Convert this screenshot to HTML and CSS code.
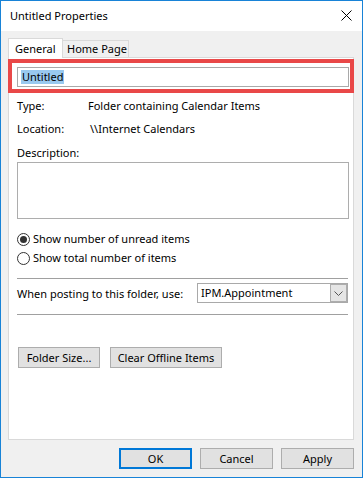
FILE: index.html
```html
<!DOCTYPE html>
<html>
<head>
<meta charset="utf-8">
<link rel="stylesheet" href="styles.css">
</head>
<body>
<div class="window">
  <div class="titlebar">
    <span class="title">Untitled Properties</span>
    <svg class="close" width="11" height="11" viewBox="0 0 11 11"><path d="M0.5 0.5 L10.5 10.5 M10.5 0.5 L0.5 10.5" stroke="#000" stroke-width="1" fill="none"/></svg>
  </div>
  <div class="client">
    <div class="tabs">
      <div class="tab active">General</div>
      <div class="tab">Home Page</div>
    </div>
    <div class="panel">
      <div class="highlight"></div>
      <div class="name-input"><span class="sel">Untitled</span></div>
      <div class="info-row first"><span class="label">Type:</span><span>Folder containing Calendar Items</span></div>
      <div class="info-row loc"><span class="label">Location:</span><span class="val-loc">\\Internet Calendars</span></div>
      <div class="info-row desc">Description:</div>
      <div class="desc-box"></div>
      <div class="radio-row first"><span class="radio checked"></span><span>Show number of unread items</span></div>
      <div class="radio-row second"><span class="radio"></span><span>Show total number of items</span></div>
      <div class="sep sep1"></div>
      <div class="post-row">
        <span>When posting to this folder, use:</span>
        <div class="combo">
          <span class="combo-text">IPM.Appointment</span>
          <div class="drop"><svg width="9" height="5" viewBox="0 0 9 5"><path d="M0.5 0.5 L4.5 4.5 L8.5 0.5" stroke="#555" stroke-width="1" fill="none"/></svg></div>
        </div>
      </div>
      <div class="sep sep2"></div>
      <div class="panel-buttons">
        <div class="btn folder">Folder Size...</div>
        <div class="btn clear">Clear Offline Items</div>
      </div>
    </div>
    <div class="dialog-buttons">
      <div class="btn dlg default">OK</div>
      <div class="btn dlg">Cancel</div>
      <div class="btn dlg">Apply</div>
    </div>
  </div>
</div>
</body>
</html>
```
FILE: styles.css
```css
* { box-sizing: border-box; }
html, body { margin: 0; padding: 0; background: #f0f0f0; }
body { font-family: "Noto Sans", "Open Sans", sans-serif; font-size: 11px; color: #000; }

.window {
  width: 363px;
  height: 478px;
  border: 1px solid #1883d7;
  background: #f0f0f0;
  display: flex;
  flex-direction: column;
}

.titlebar {
  height: 30px;
  background: #fff;
  display: flex;
  align-items: center;
  justify-content: space-between;
  padding: 0 10px 0 9px;
}
.title { font-size: 11px; line-height: 16px; }
.close { display: block; margin-top: -1px; }

.client { padding: 7px 8px 0 7px; display: flex; flex-direction: column; }

.tabs { display: flex; align-items: flex-end; height: 19px; }
.tab {
  border: 1px solid #d9d9d9;
  border-bottom: none;
  height: 17px;
  line-height: 16px;
  padding: 0 0 0 4px;
  background: #f0f0f0;
  position: relative;
}
.tab.active {
  background: #fff;
  height: 20px;
  margin-bottom: -1px;
  width: 55px;
  padding-left: 6px;
  line-height: 20px;
  z-index: 2;
}
.tab:not(.active) { margin-left: -1px; width: 67px; }

.panel {
  position: relative;
  height: 383px;
  border: 1px solid #d9d9d9;
  background: #fff;
  padding: 0 5px 0 8px;
  display: flex;
  flex-direction: column;
}

.highlight {
  position: absolute;
  left: -1px;
  top: 1px;
  width: 346px;
  height: 34px;
  border: 4px solid #e94848;
}

.name-input {
  margin-top: 9px;
  height: 20px;
  width: 332px;
  border: 1px solid #a9a9a9;
  padding: 2px 0 0 3px;
  line-height: 14px;
}
.sel { background: #99c9ef; display: inline-block; height: 14px; padding: 0 1px; }

.info-row { height: 16px; line-height: 16px; display: flex; }
.info-row.first { margin-top: 11px; }
.info-row.loc { margin-top: 7px; }
.info-row.desc { margin-top: 8px; }
.label { width: 71px; flex: none; }
.val-loc { margin-left: 2px; }

.desc-box {
  margin-top: 1px;
  height: 57px;
  width: 332px;
  border: 1px solid #adadad;
}

.radio-row { height: 16px; line-height: 16px; display: flex; align-items: center; }
.radio-row.first { margin-top: 12px; }
.radio-row.second { margin-top: 3px; }
.radio {
  width: 13px; height: 13px;
  border: 1px solid #333;
  border-radius: 50%;
  margin-right: 3px;
  display: flex; align-items: center; justify-content: center;
  flex: none;
}
.radio.checked::after {
  content: "";
  width: 7px; height: 7px;
  border-radius: 50%;
  background: #333;
}

.sep { height: 1px; width: 331px; background: #a0a0a0; }
.sep1 { margin-top: 12px; }
.sep2 { margin-top: 11px; }

.post-row { margin-top: 4px; height: 20px; width: 331px; display: flex; align-items: center; justify-content: space-between; }
.combo {
  width: 151px; height: 20px;
  border: 1px solid #a9a9a9;
  display: flex; align-items: center; justify-content: space-between;
  padding-left: 3px;
}
.combo-text { line-height: 16px; }
.drop {
  width: 17px; height: 18px;
  border: 1px solid #adadad;
  background: #e5e5e5;
  display: flex; align-items: center; justify-content: center;
}
.drop svg { display: block; }

.btn {
  height: 21px;
  border: 1px solid #adadad;
  background: #e1e1e1;
  display: flex; align-items: center; justify-content: center;
  line-height: 16px;
}
.panel-buttons { margin-top: 32px; display: flex; gap: 10px; padding-left: 1px; }
.btn.folder { width: 82px; }
.btn.clear { width: 112px; }

.dialog-buttons { margin-top: 8px; display: flex; justify-content: flex-end; gap: 8px; padding-right: 0; }
.btn.dlg { width: 73px; }
.btn.default { border: 2px solid #0078d7; }
```
